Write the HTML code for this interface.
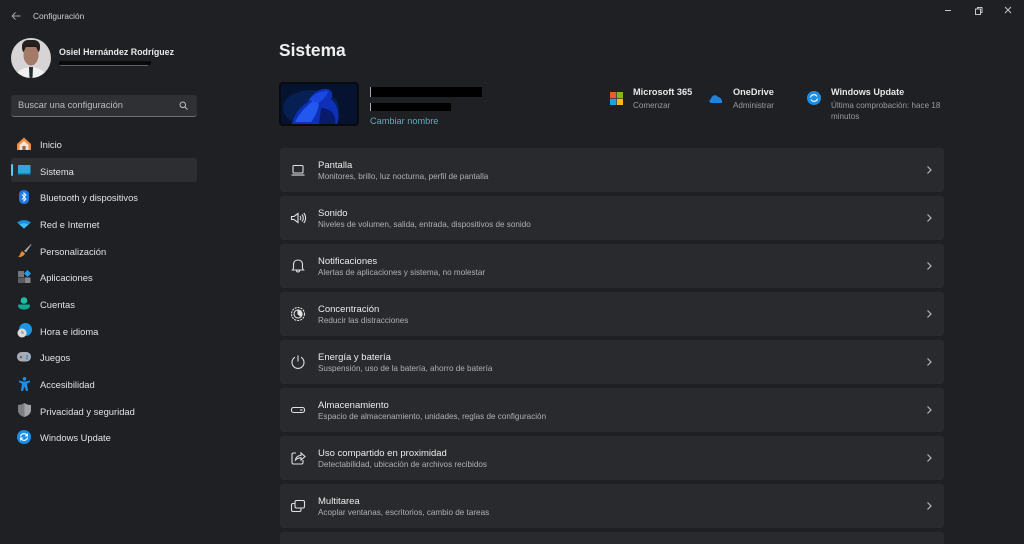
<!DOCTYPE html>
<html lang="es"><head><meta charset="utf-8"><title>Configuración</title>
<style>
*{box-sizing:border-box}
html,body{margin:0;padding:0;width:1024px;height:544px;overflow:hidden;background:#1f2024}
#w{position:relative;width:1024px;height:544px;overflow:hidden;background:#1f2024;font-family:"Liberation Sans",sans-serif;color:#fff}
.t{position:absolute;white-space:nowrap;line-height:1}
.nav{font-size:9.4px;color:#e2e2e2;left:40px}
.card{position:absolute;left:280px;width:664px;height:44px;background:#292a2e;border-radius:3px}
.card .a{position:absolute;left:38px;top:13px;font-size:9.5px;color:#ececec;line-height:1;white-space:nowrap}
.card .b{position:absolute;left:38px;top:25px;font-size:8.15px;color:#b0b0b0;line-height:1;white-space:nowrap}
.card svg.i{position:absolute;left:10px;top:14px;width:16px;height:16px;fill:none;stroke:#e0e0e0;stroke-width:1.1}
.card svg.c{position:absolute;left:644px;top:17px;width:10px;height:10px;fill:none;stroke:#b8b8b8;stroke-width:1.2}
svg{position:absolute;overflow:visible}
.bar{position:absolute;background:#000}
</style></head><body><div id="w">

<!-- title bar -->
<svg style="left:11px;top:11px" width="10" height="10" fill="none" stroke="#a5a5a5" stroke-width=".9"><path d="M1 5H9.500M1 5L4.500 1.500M1 5L4.500 8.500"/></svg>
<div class="t" style="left:33px;top:12px;font-size:8.3px;color:#d0d0d0">Configuración</div>
<svg style="left:944px;top:5px" width="70" height="12" fill="none" stroke="#c4c4c4" stroke-width="1"><path d="M1 5.500H7"/><path d="M31.500 4H36.500V9.500H31.500ZM33.500 4V2.500H38V7.500H36.500"/><path d="M61 2L67 8M67 2L61 8"/></svg>

<!-- profile -->
<svg style="left:11px;top:38px" width="40" height="40" viewBox="0 0 40 40">
<defs><clipPath id="av"><circle cx="20" cy="20" r="20"/></clipPath></defs>
<g clip-path="url(#av)"><rect width="40" height="40" fill="#d6d4d4"/><path d="M4 40C5 33 11 30 20 29C29 30 35 33 36 40Z" fill="#f0f0f0"/><rect x="11" y="2" width="18" height="14" rx="6" fill="#262020"/><ellipse cx="20" cy="17" rx="7.500" ry="10.500" fill="#a47a68"/><path d="M12 13C13 4 27 4 28 13L26 9H14Z" fill="#211b1b"/><path d="M18 29H22L21.500 40H18.500Z" fill="#1f2a33"/></g></svg>
<div class="t" style="left:59px;top:48px;font-size:8.850px;font-weight:bold;color:#e8e8e8">Osiel Hernández Rodríguez</div>
<div class="bar" style="left:59px;top:61px;width:92px;height:4px;border-radius:1px;background:#0a0a0a"></div>
<div class="t" style="left:60px;top:65px;width:88px;height:1px;background:#8a8a8a;opacity:.6"></div>

<!-- search -->
<div style="position:absolute;left:11px;top:95px;width:186px;height:22px;background:#2f3033;border-radius:3px;border-bottom:1px solid #6e6f71"></div>
<div class="t" style="left:18px;top:101px;font-size:9.300px;color:#bcbcbc">Buscar una configuración</div>
<svg style="left:179px;top:101px" width="9" height="9" fill="none" stroke="#c0c0c0" stroke-width="1"><circle cx="3.800" cy="3.800" r="2.800"/><path d="M6 6L8.500 8.500"/></svg>

<!-- selected nav -->
<div style="position:absolute;left:11px;top:158px;width:186px;height:24px;background:#2d2e32;border-radius:3px"></div>
<div style="position:absolute;left:11px;top:164px;width:2px;height:12px;background:#5cc8f8;border-radius:1px"></div>

<div class="t nav" style="top:140px">Inicio</div>
<div class="t nav" style="top:167px">Sistema</div>
<div class="t nav" style="top:193px">Bluetooth y dispositivos</div>
<div class="t nav" style="top:220px">Red e Internet</div>
<div class="t nav" style="top:247px">Personalización</div>
<div class="t nav" style="top:273px">Aplicaciones</div>
<div class="t nav" style="top:300px">Cuentas</div>
<div class="t nav" style="top:327px">Hora e idioma</div>
<div class="t nav" style="top:353px">Juegos</div>
<div class="t nav" style="top:380px">Accesibilidad</div>
<div class="t nav" style="top:407px">Privacidad y seguridad</div>
<div class="t nav" style="top:433px">Windows Update</div>

<!-- nav icons -->
<svg style="left:17px;top:137px" width="14" height="13"><path d="M7 .5L14 7V13H0V7Z" fill="#f08a3c"/><path d="M2.500 8L7 3.800L11.500 8V13H2.500Z" fill="#e8e6e4"/><rect x="5.300" y="9" width="3.400" height="4" fill="#9a6a4c"/></svg>
<svg style="left:17px;top:164px" width="14" height="12"><rect x="1" y="1" width="12.500" height="9.500" fill="#2ea8dc"/><rect x="1" y="9" width="12.500" height="1.500" fill="#1a86c2"/></svg>
<svg style="left:19px;top:190px" width="10" height="14"><rect width="10" height="14" rx="4.500" fill="#1c78e8"/><path d="M2.800 4.500L7 9L5 11V3L7 5L2.800 9.500" fill="none" stroke="#fff" stroke-width=".9"/></svg>
<svg style="left:17px;top:219px" width="14" height="10"><path d="M0 3.500C4 .3 10 .3 14 3.500L7 9.500Z" fill="#1e8ee0"/><path d="M2.500 5.500C5 3.800 9 3.800 11.500 5.500L7 9.500Z" fill="#3fc0f4"/></svg>
<svg style="left:17px;top:243px" width="15" height="15"><path d="M14 1L7 8L9 9.500L14.500 1.500Z" fill="#a8a8a8"/><path d="M5 8L8 10.500C7 13 4 14.500 1 14C3 13 3 10 5 8Z" fill="#e88a2c"/></svg>
<svg style="left:18px;top:270px" width="13" height="13"><rect x="0" y="1" width="6" height="6" fill="#75777c"/><rect x="0" y="7.500" width="6" height="5.500" fill="#5c5e63"/><rect x="6.500" y="7.500" width="6" height="5.500" fill="#85878c"/><path d="M9.500 0L13 3.500L9.500 7L6 3.500Z" fill="#2a9ae6"/></svg>
<svg style="left:18px;top:297px" width="12" height="13"><circle cx="6" cy="3.500" r="3.300" fill="#1cc0a4"/><path d="M0 8.500C0 7.500 1 7.500 2 7.500H10C11 7.500 12 7.500 12 8.500C12 11.500 9 12.500 6 12.500C3 12.500 0 11.500 0 8.500Z" fill="#10a890"/></svg>
<svg style="left:17px;top:323px" width="15" height="15"><circle cx="8.500" cy="6.500" r="6.500" fill="#1c96e2"/><circle cx="5" cy="10" r="4.500" fill="#dcdcdc"/><path d="M5 7.500V10H7" fill="none" stroke="#666" stroke-width=".7"/></svg>
<svg style="left:17px;top:352px" width="14" height="10"><rect width="14" height="9.500" rx="4.500" fill="#a8abb2"/><circle cx="4" cy="5" r="1.300" fill="#676a70"/><circle cx="10" cy="4" r="1" fill="#2a88d8"/><circle cx="10" cy="6.500" r="1" fill="#2a88d8"/></svg>
<svg style="left:19px;top:377px" width="11" height="14"><circle cx="5.500" cy="1.800" r="1.800" fill="#1c8ee8"/><path d="M0 3.500L4 4.500H7L11 3.500V5L8 6.800L9 14H7L5.500 9.500L4 14H2L3 6.800L0 5Z" fill="#1c8ee8"/></svg>
<svg style="left:18px;top:403px" width="13" height="14"><path d="M6.500 0C8.500 1.500 10.500 2 13 2V7C13 10.500 10 13 6.500 14C3 13 0 10.500 0 7V2C2.500 2 4.500 1.500 6.500 0Z" fill="#a2a4a6"/><path d="M6.500 0V14C3 13 0 10.500 0 7V2C2.500 2 4.500 1.500 6.500 0Z" fill="#7d7f82"/></svg>
<svg style="left:17px;top:430px" width="14" height="14"><circle cx="7" cy="7" r="7" fill="#1c8ee6"/><path d="M3.500 6.500A3.500 3.500 0 0 1 10 5.500M10.500 7.500A3.500 3.500 0 0 1 4 8.500" fill="none" stroke="#fff" stroke-width="1.100"/><path d="M10.500 3.500V6H8M3.500 10.500V8H6" fill="none" stroke="#fff" stroke-width=".9"/></svg>

<!-- main header -->
<div class="t" style="left:279px;top:42px;font-size:17.400px;font-weight:bold;color:#f0f0f0">Sistema</div>

<div style="position:absolute;left:279px;top:82px;width:80px;height:44px;background:#060a18;border:2px solid #0a0a0c;border-radius:4px;overflow:hidden">
<svg style="left:0;top:0" width="76" height="40" viewBox="0 0 76 40"><rect width="76" height="40" fill="#051230"/><ellipse cx="30" cy="24" rx="28" ry="18" fill="#08245c" opacity=".8"/><path d="M11 40C13 30 20 22 27 18C30 10 38 4 46 5C52 6 52 12 50 15C56 20 60 30 56 40Z" fill="#0e2fb8"/><path d="M14 38C19 28 27 20 36 14C40 20 36 30 30 38Z" fill="#2358ee"/><path d="M28 16C32 10 40 7 47 7C46 12 42 16 37 19Z" fill="#1a48e0"/><path d="M40 24C48 24 56 30 54 40H38Z" fill="#081a6c"/></svg></div>

<div class="bar" style="left:371px;top:87px;width:111px;height:10px"></div>
<div class="bar" style="left:370px;top:87px;width:1px;height:10px;background:#aaa"></div>
<div class="bar" style="left:371px;top:103px;width:80px;height:8px"></div>
<div class="bar" style="left:370px;top:103px;width:1px;height:8px;background:#aaa"></div>
<div class="t" style="left:370px;top:117px;font-size:9.200px;color:#64a8ba">Cambiar nombre</div>

<!-- top links -->
<svg style="left:610px;top:92px" width="13" height="13"><rect width="6.200" height="6.200" fill="#f05a28"/><rect x="6.800" width="6.200" height="6.200" fill="#80b81c"/><rect y="6.800" width="6.200" height="6.200" fill="#1ca2e8"/><rect x="6.800" y="6.800" width="6.200" height="6.200" fill="#fcb814"/></svg>
<div class="t" style="left:633px;top:88px;font-size:9.200px;font-weight:bold;color:#e8e8e8">Microsoft 365</div>
<div class="t" style="left:633px;top:102px;font-size:8.100px;color:#9a9a9a">Comenzar</div>
<svg style="left:709px;top:94px" width="13" height="9"><path d="M2.500 9C0 9 -.5 5.500 2 5C2.500 1 7.500 0 9 3C11.500 3 13.500 6 13 9Z" fill="#1c84dc"/></svg>
<div class="t" style="left:733px;top:88px;font-size:9.200px;font-weight:bold;color:#e8e8e8">OneDrive</div>
<div class="t" style="left:733px;top:102px;font-size:8.100px;color:#9a9a9a">Administrar</div>
<svg style="left:807px;top:91px" width="14" height="14"><circle cx="7" cy="7" r="7" fill="#1c8ee6"/><path d="M3.500 6.500A3.500 3.500 0 0 1 10 5.500M10.500 7.500A3.500 3.500 0 0 1 4 8.500" fill="none" stroke="#fff" stroke-width="1.100"/></svg>
<div class="t" style="left:831px;top:88px;font-size:9.100px;font-weight:bold;color:#e8e8e8">Windows Update</div>
<div class="t" style="left:831px;top:102px;font-size:8.100px;color:#9a9a9a">Última comprobación: hace 18</div>
<div class="t" style="left:831px;top:113px;font-size:8.100px;color:#9a9a9a">minutos</div>

<!-- cards -->
<div class="card" style="top:148px"><svg class="i" viewBox="0 0 16 16"><rect x="3" y="3.500" width="10" height="7.500" rx="1"/><path d="M1.500 13H14.500"/></svg><div class="a">Pantalla</div><div class="b">Monitores, brillo, luz nocturna, perfil de pantalla</div><svg class="c" viewBox="0 0 10 10"><path d="M3.500 1.500L7 5L3.500 8.500"/></svg></div>
<div class="card" style="top:196px"><svg class="i" viewBox="0 0 16 16"><path d="M1.500 6.500H4L8 3.500V12.500L4 9.500H1.500Z"/><path d="M10 6A3 3 0 0 1 10 10M12 4.500A5.500 5.500 0 0 1 12 11.500M13.800 3A8 8 0 0 1 13.800 13"/></svg><div class="a">Sonido</div><div class="b">Niveles de volumen, salida, entrada, dispositivos de sonido</div><svg class="c" viewBox="0 0 10 10"><path d="M3.500 1.500L7 5L3.500 8.500"/></svg></div>
<div class="card" style="top:244px"><svg class="i" viewBox="0 0 16 16"><path d="M2.500 12H13.500C12 10.500 12.500 9 12.500 6.500C12.500 3.500 10.500 2 8 2C5.500 2 3.500 3.500 3.500 6.500C3.500 9 4 10.500 2.500 12Z"/><path d="M6.500 12.500A1.500 1.500 0 0 0 9.500 12.500"/></svg><div class="a">Notificaciones</div><div class="b">Alertas de aplicaciones y sistema, no molestar</div><svg class="c" viewBox="0 0 10 10"><path d="M3.500 1.500L7 5L3.500 8.500"/></svg></div>
<div class="card" style="top:292px"><svg class="i" viewBox="0 0 16 16"><circle cx="8" cy="8" r="6.500" stroke-dasharray="2 1"/><circle cx="8" cy="8" r="4"/><path d="M8 4A4 4 0 0 1 11 10.500L8 8Z" fill="#e8e8e8"/></svg><div class="a">Concentración</div><div class="b">Reducir las distracciones</div><svg class="c" viewBox="0 0 10 10"><path d="M3.500 1.500L7 5L3.500 8.500"/></svg></div>
<div class="card" style="top:340px"><svg class="i" viewBox="0 0 16 16"><path d="M8 1.500V7.500"/><path d="M5 3.200A6 6 0 1 0 11 3.200"/></svg><div class="a">Energía y batería</div><div class="b">Suspensión, uso de la batería, ahorro de batería</div><svg class="c" viewBox="0 0 10 10"><path d="M3.500 1.500L7 5L3.500 8.500"/></svg></div>
<div class="card" style="top:388px"><svg class="i" viewBox="0 0 16 16"><rect x="1.500" y="5.500" width="13" height="5" rx="2"/><path d="M10 8H12.500"/></svg><div class="a">Almacenamiento</div><div class="b">Espacio de almacenamiento, unidades, reglas de configuración</div><svg class="c" viewBox="0 0 10 10"><path d="M3.500 1.500L7 5L3.500 8.500"/></svg></div>
<div class="card" style="top:436px"><svg class="i" viewBox="0 0 16 16"><path d="M6 3H3.500A1.500 1.500 0 0 0 2 4.500V12.500A1.500 1.500 0 0 0 3.500 14H11.500A1.500 1.500 0 0 0 13 12.500V10"/><path d="M5.500 10C6 7 8 5.500 11 5.500V3L15 6.500L11 10V7.800C9 7.800 7 8.500 5.500 10Z"/></svg><div class="a">Uso compartido en proximidad</div><div class="b">Detectabilidad, ubicación de archivos recibidos</div><svg class="c" viewBox="0 0 10 10"><path d="M3.500 1.500L7 5L3.500 8.500"/></svg></div>
<div class="card" style="top:484px"><svg class="i" viewBox="0 0 16 16"><rect x="5" y="2.500" width="9.500" height="7.500" rx="1.500"/><path d="M5 5.500H3A1.500 1.500 0 0 0 1.500 7V12A1.500 1.500 0 0 0 3 13.500H9.500A1.500 1.500 0 0 0 11 12V10"/></svg><div class="a">Multitarea</div><div class="b">Acoplar ventanas, escritorios, cambio de tareas</div><svg class="c" viewBox="0 0 10 10"><path d="M3.500 1.500L7 5L3.500 8.500"/></svg></div>
<div class="card" style="top:532px;height:12px;border-radius:3px 3px 0 0"></div>
</div></body></html>
